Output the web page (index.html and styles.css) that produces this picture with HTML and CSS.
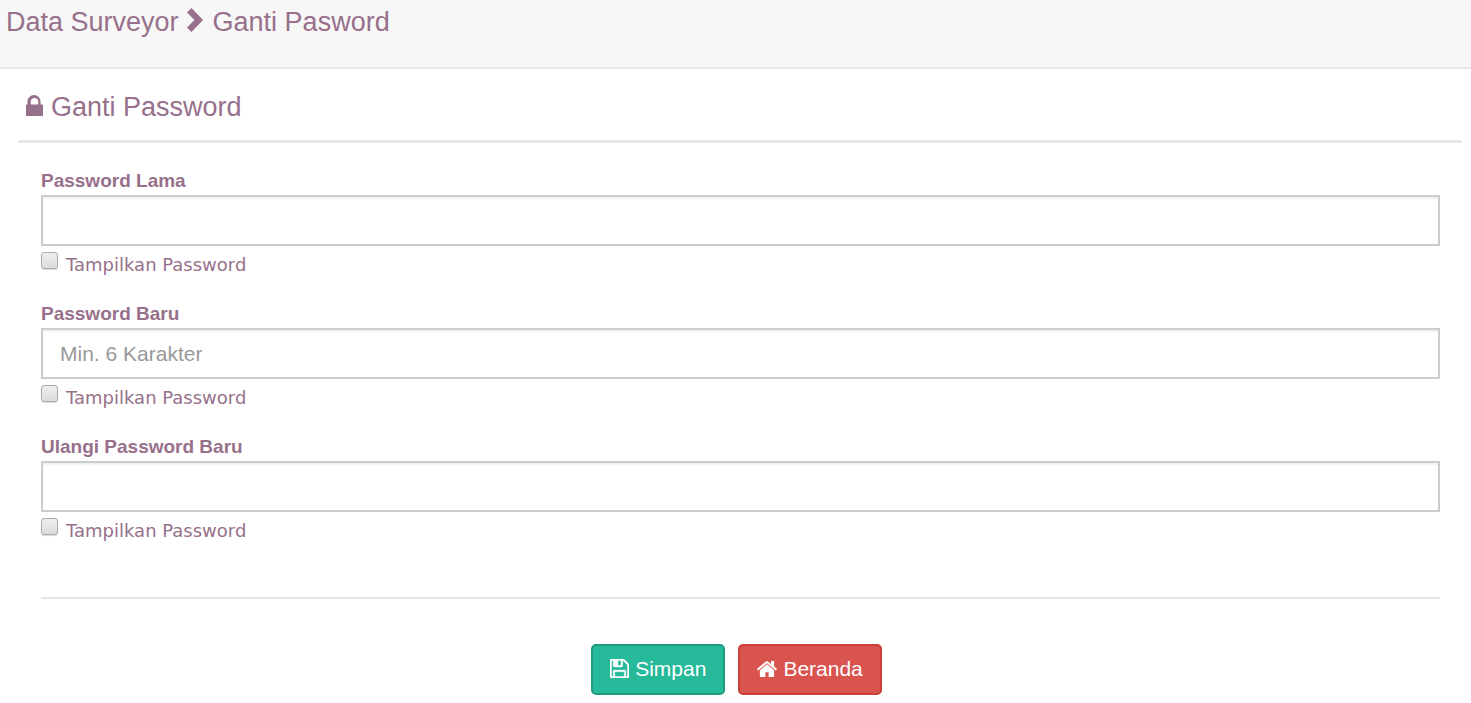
FILE: index.html
```html
<!DOCTYPE html>
<html lang="id">
<head>
    <meta charset="UTF-8">
    <meta name="viewport" content="width=device-width, initial-scale=1.0">
    <title>Data Surveyor - Ganti Password</title>
    <link rel="stylesheet" href="styles.css">
</head>
<body>
    <header class="page-head">
        <h1 class="heading">
            Data Surveyor
            <svg class="icon-chevron" viewBox="0 0 16 24" aria-hidden="true"><path d="M4.5 0L16 12 4.5 24 0 19.5 7.5 12 0 4.5z"/></svg>
            Ganti Pasword
        </h1>
    </header>

    <main class="panel">
        <h2 class="heading panel-title">
            <svg class="icon-lock" viewBox="320 128 1152 1408" aria-hidden="true"><path d="M640 768h512v-192q0-106-75-181t-181-75-181 75-75 181v192zM1472 800v736h-1152v-736q0-32 32-32h64v-192q0-184 132-316t316-132 316 132 132 316v192h128q32 0 32 32z"/></svg>
            Ganti Password
        </h2>

        <form class="form">
            <div class="form-group">
                <label class="label" for="pass_lama">Password Lama</label>
                <input class="form-control" type="password" id="pass_lama">
                <div class="check">
                    <input type="checkbox" id="show_lama">
                    <label for="show_lama">Tampilkan Password</label>
                </div>
            </div>
            <div class="form-group">
                <label class="label" for="pass_baru">Password Baru</label>
                <input class="form-control" type="password" id="pass_baru" placeholder="Min. 6 Karakter">
                <div class="check">
                    <input type="checkbox" id="show_baru">
                    <label for="show_baru">Tampilkan Password</label>
                </div>
            </div>
            <div class="form-group">
                <label class="label" for="pass_ulangi">Ulangi Password Baru</label>
                <input class="form-control" type="password" id="pass_ulangi">
                <div class="check">
                    <input type="checkbox" id="show_ulangi">
                    <label for="show_ulangi">Tampilkan Password</label>
                </div>
            </div>

            <div class="actions">
                <button class="btn btn-simpan" type="submit">
                    <svg class="icon-save" viewBox="128 128 1536 1536" aria-hidden="true"><path d="M512 1536h768v-384h-768v384zm896 0h128v-896q0-14-10-38.5t-20-34.5l-281-281q-10-10-34-20t-39-10v416q0 40-28 68t-68 28h-576q-40 0-68-28t-28-68v-416h-128v1280h128v-416q0-40 28-68t68-28h832q40 0 68 28t28 68v416zm-384-928v-320q0-13-9.5-22.5t-22.5-9.5h-192q-13 0-22.5 9.5t-9.5 22.5v320q0 13 9.5 22.5t22.5 9.5h192q13 0 22.5-9.5t9.5-22.5zm640 32v928q0 40-28 68t-68 28h-1344q-40 0-68-28t-28-68v-1344q0-40 28-68t68-28h928q40 0 88 20t76 48l280 280q28 28 48 76t20 88z"/></svg>
                    Simpan
                </button>
                <button class="btn btn-beranda" type="button">
                    <svg class="icon-home" viewBox="88 250 1616 1286" aria-hidden="true"><path d="M1472 992v480q0 26-19 45t-45 19h-384v-384h-256v384h-384q-26 0-45-19t-19-45v-480q0-1 .5-3t.5-3l575-474 575 474q1 2 1 6zm223-69l-62 74q-8 9-21 11h-3q-13 0-21-7l-692-577-692 577q-12 8-24 7-13-2-21-11l-62-74q-8-10-7-23.5t11-21.5l719-599q32-26 76-26t76 26l244 204v-195q0-14 9-23t23-9h192q14 0 23 9t9 23v408l219 182q10 8 11 21.5t-7 23.5z"/></svg>
                    Beranda
                </button>
            </div>
        </form>
    </main>
</body>
</html>
```
FILE: styles.css
```css
* {
    margin: 0;
    padding: 0;
    box-sizing: border-box;
}

body {
    background: #fff;
    color: #97708b;
    font-family: "Liberation Sans", Arial, sans-serif;
}

svg {
    fill: currentColor;
    flex: none;
}

.heading {
    display: flex;
    align-items: center;
    font-size: 27px;
    font-weight: normal;
    line-height: 32px;
}

.page-head {
    padding: 6px 6px 29px;
    background: #f7f7f7;
    border-bottom: 2px solid #e7e7ea;
}

.icon-chevron {
    width: 16px;
    height: 24px;
    margin: 0 10px 4px 8px;
}

.panel {
    padding: 22px 9px 8px 18px;
}

.panel-title {
    padding: 0 8px 17px;
    border-bottom: 3px solid #e7e7ed;
}

.icon-lock {
    width: 17px;
    height: 21px;
    margin-right: 8px;
    margin-bottom: 4px;
}

.form {
    padding: 24px 22px 0 23px;
}

.form-group {
    margin-bottom: 18px;
}

.label {
    display: block;
    font-size: 19px;
    font-weight: bold;
    line-height: 28px;
}

.form-control {
    display: block;
    width: 100%;
    height: 51px;
    padding: 0 17px;
    border: 2px solid #ccc;
    box-shadow: inset 0 2px 2px rgba(0, 0, 0, 0.06);
    color: #555;
    font-family: inherit;
    font-size: 21px;
    outline: none;
}

.form-control::placeholder {
    color: #999;
}

.check {
    display: flex;
    align-items: flex-start;
    gap: 8px;
    height: 36px;
    padding-top: 6px;
    font-family: Verdana, "DejaVu Sans", sans-serif;
    font-size: 18px;
    line-height: 26px;
}

.check input {
    appearance: none;
    width: 17px;
    height: 17px;
    border: 1px solid #aaa;
    border-radius: 3px;
    background: linear-gradient(#eee, #dcdcdc);
    box-shadow: 0 1px 1px rgba(0, 0, 0, 0.15);
}

.check input:checked {
    background: #97708b;
}

.actions {
    display: flex;
    justify-content: center;
    gap: 13px;
    margin-top: 49px;
    padding: 45px 8px 0 0;
    border-top: 2px solid #e5e5e5;
}

.btn {
    display: flex;
    align-items: center;
    gap: 6px;
    height: 51px;
    padding: 0 17px 2px;
    border: 2px solid;
    border-radius: 5px;
    color: #fff;
    font-family: inherit;
    font-size: 21px;
    cursor: pointer;
}

.btn-simpan {
    background: #26b99a;
    border-color: #1f9c80;
}

.btn-beranda {
    background: #d9534f;
    border-color: #cb3f3b;
}

.icon-save {
    width: 19px;
    height: 19px;
    stroke: currentColor;
    stroke-width: 30px;
}

.icon-home {
    width: 20px;
    height: 16px;
}
```
